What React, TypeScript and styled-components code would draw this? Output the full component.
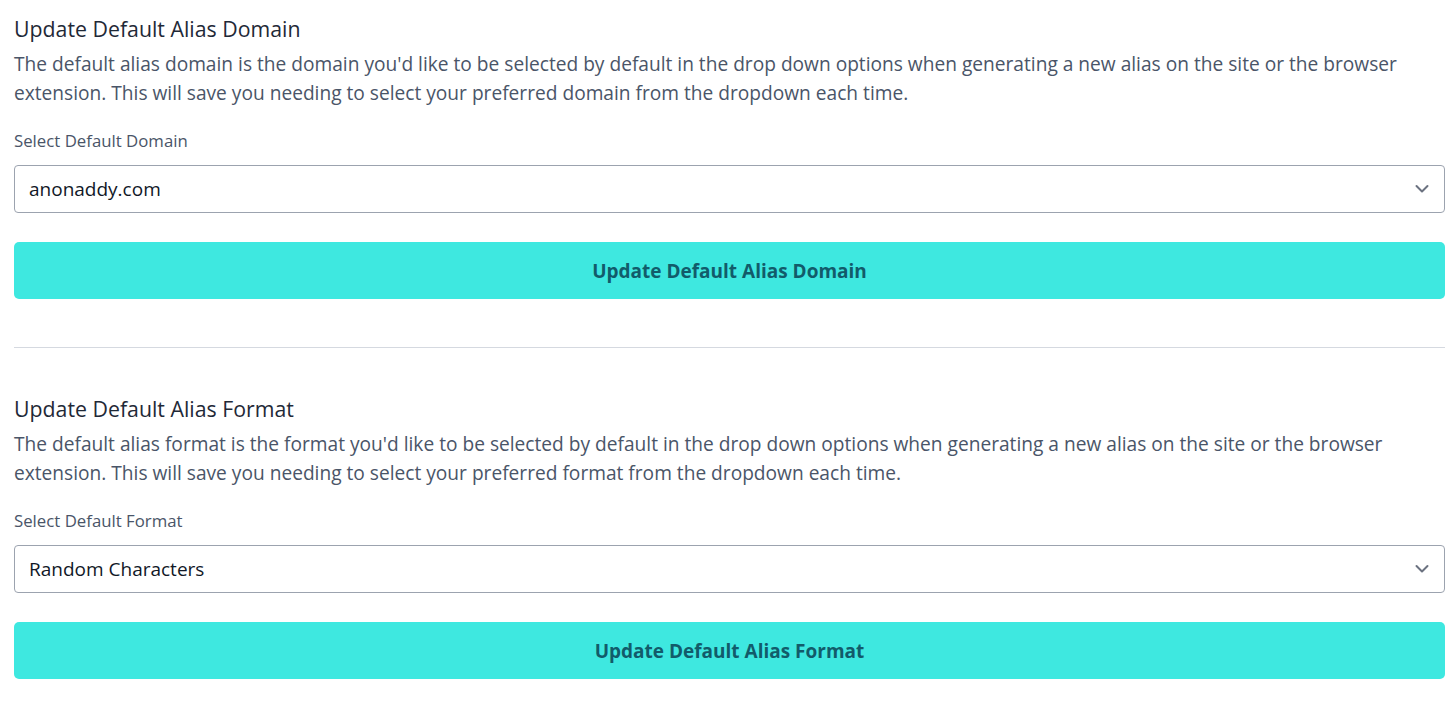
import React from "react";
import styled, { createGlobalStyle } from "styled-components";

const GlobalStyle = createGlobalStyle`
  html, body { margin: 0; padding: 0; background: #ffffff; }
  body { font-family: "Open Sans", "Liberation Sans", sans-serif; }
  * { box-sizing: border-box; }
`;

const Page = styled.div`
  padding: 15px 11px 0 14px;
`;

const Section = styled.section`
  display: flex;
  flex-direction: column;
`;

const Heading = styled.h3`
  margin: 0;
  font-size: 21.3px;
  line-height: 28px;
  font-weight: 400;
  color: #1f2937;
`;

const Description = styled.p`
  margin: 7px 0 0;
  font-size: 19.15px;
  line-height: 29px;
  color: #4a5568;
`;

const Label = styled.label`
  margin-top: 21px;
  font-size: 16.8px;
  line-height: 24px;
  color: #4a5568;
`;

const SelectWrap = styled.div`
  position: relative;
  margin-top: 12px;
`;

const Select = styled.select`
  appearance: none;
  -webkit-appearance: none;
  width: 100%;
  height: 48px;
  padding: 0 40px 0 14px;
  border: 1px solid #9ca3af;
  border-radius: 4px;
  background: #ffffff;
  font-family: "Open Sans", "Liberation Sans", sans-serif;
  font-size: 19px;
  color: #111827;
  outline: none;
`;

const Chevron = styled.svg`
  position: absolute;
  right: 16px;
  top: 50%;
  transform: translateY(-50%);
  pointer-events: none;
`;

const Button = styled.button`
  margin-top: 29px;
  height: 57px;
  width: 100%;
  border: none;
  border-radius: 5px;
  background: #3ee8e0;
  color: #125b6a;
  font-family: "Open Sans", "Liberation Sans", sans-serif;
  font-size: 19px;
  font-weight: 700;
  cursor: pointer;
`;

const Divider = styled.hr`
  margin: 48px 0 47px;
  border: none;
  border-top: 1px solid #d5d9e0;
`;

type SettingProps = {
  title: string;
  text: string;
  label: string;
  id: string;
  options: string[];
  value: string;
  button: string;
};

const Setting = ({ title, text, label, id, options, value, button }: SettingProps) => (
  <Section>
    <Heading>{title}</Heading>
    <Description>{text}</Description>
    <Label htmlFor={id}>{label}</Label>
    <SelectWrap>
      <Select id={id} defaultValue={value}>
        {options.map((o) => (
          <option key={o} value={o}>
            {o}
          </option>
        ))}
      </Select>
      <Chevron width="14" height="9" viewBox="0 0 14 9" fill="none">
        <path d="M1.5 1.5 L7 7 L12.5 1.5" stroke="#6b7280" strokeWidth="2" strokeLinecap="round" strokeLinejoin="round" />
      </Chevron>
    </SelectWrap>
    <Button type="button">{button}</Button>
  </Section>
);

export default function App() {
  return (
    <Page>
      <GlobalStyle />
      <Setting
        title="Update Default Alias Domain"
        text="The default alias domain is the domain you'd like to be selected by default in the drop down options when generating a new alias on the site or the browser extension. This will save you needing to select your preferred domain from the dropdown each time."
        label="Select Default Domain"
        id="default-domain"
        options={["anonaddy.com", "anonaddy.me"]}
        value="anonaddy.com"
        button="Update Default Alias Domain"
      />
      <Divider />
      <Setting
        title="Update Default Alias Format"
        text="The default alias format is the format you'd like to be selected by default in the drop down options when generating a new alias on the site or the browser extension. This will save you needing to select your preferred format from the dropdown each time."
        label="Select Default Format"
        id="default-format"
        options={["Random Characters", "UUID", "Random Words"]}
        value="Random Characters"
        button="Update Default Alias Format"
      />
    </Page>
  );
}
